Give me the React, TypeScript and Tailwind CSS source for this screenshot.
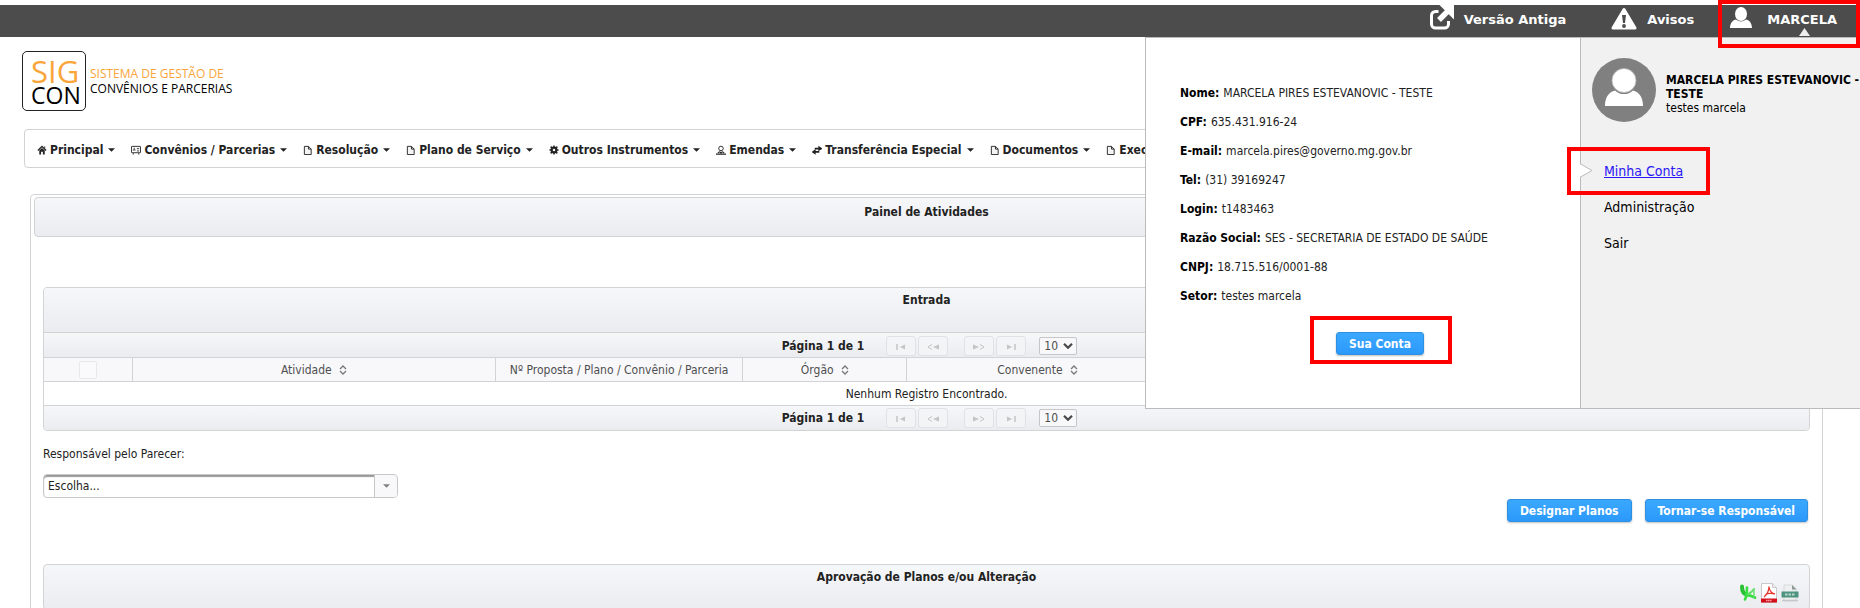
import React from "react";

type IconName = "home" | "contact" | "document" | "gear" | "person" | "transfer";

const menuItems: { icon: IconName; label: string }[] = [
  { icon: "home", label: "Principal" },
  { icon: "contact", label: "Convênios / Parcerias" },
  { icon: "document", label: "Resolução" },
  { icon: "document", label: "Plano de Serviço" },
  { icon: "gear", label: "Outros Instrumentos" },
  { icon: "person", label: "Emendas" },
  { icon: "transfer", label: "Transferência Especial" },
  { icon: "document", label: "Documentos" },
  { icon: "document", label: "Execução" },
];

const accountDetails = [
  { term: "Nome:", value: "MARCELA PIRES ESTEVANOVIC - TESTE" },
  { term: "CPF:", value: "635.431.916-24" },
  { term: "E-mail:", value: "marcela.pires@governo.mg.gov.br" },
  { term: "Tel:", value: "(31) 39169247" },
  { term: "Login:", value: "t1483463" },
  { term: "Razão Social:", value: "SES - SECRETARIA DE ESTADO DE SAÚDE" },
  { term: "CNPJ:", value: "18.715.516/0001-88" },
  { term: "Setor:", value: "testes marcela" },
];

function MenuIcon({ name }: { name: IconName }) {
  return (
    <svg viewBox="0 0 11 11" className="h-[10px] w-[10px] shrink-0" fill="none" stroke="#222" aria-hidden="true">
      {name === "home" && (
        <>
          <path d="M1 6 5.5 1.5 10 6" strokeWidth="1.5" />
          <path d="M2.5 6v4.5h2V7.500h2v3h2V6L5.500 3.200Z" fill="#222" stroke="none" />
          <path d="M8.500 1.500v2" />
        </>
      )}
      {name === "contact" && (
        <>
          <rect x="0.500" y="1.500" width="10" height="7" rx="0.500" />
          <path d="M2 5.500h3M3.500 3v2M6.500 4h2.500M6.500 6.500h2.500M2.500 9v1.500M8.500 9v1.500" />
        </>
      )}
      {name === "document" && (
        <>
          <path d="M1.500 1.500h4.500L9 4.500v6h-7.500z" fill="#f4f4f4" />
          <path d="M6 1.500v3h3" />
        </>
      )}
      {name === "gear" && (
        <>
          <circle cx="5.500" cy="5.500" r="2.600" strokeWidth="2.400" />
          <path d="M5.500 .5v2M5.500 8.500v2M.5 5.500h2M8.500 5.500h2M1.800 1.800l1.500 1.500M7.700 7.700l1.500 1.500M9.200 1.800l-1.500 1.500M3.300 7.700l-1.500 1.500" strokeWidth="1.600" />
        </>
      )}
      {name === "person" && (
        <>
          <circle cx="5.500" cy="3.800" r="2.500" />
          <path d="M2 8.500 4 7.500 5.500 8.500 7 7.500 9 8.500M0 10h11" strokeWidth="1.200" />
        </>
      )}
      {name === "transfer" && (
        <>
          <path d="M3 4h5M3 7.500h5" strokeWidth="1.800" />
          <path d="M7 .8 11.500 4 7 6.800ZM4 4.500 -.5 7.700 4 10.800Z" fill="#222" stroke="none" />
        </>
      )}
    </svg>
  );
}

function CaretDown({ className }: { className: string }) {
  return (
    <svg viewBox="0 0 8 4" className={className} fill="currentColor" aria-hidden="true">
      <path d="M0 0h8L4 4Z" />
    </svg>
  );
}

function SortIcon() {
  return (
    <svg viewBox="0 0 8 10" className="h-[10px] w-2" fill="none" stroke="#777" strokeWidth="1.300" aria-hidden="true">
      <path d="M1 4 4 1l3 3M1 6l3 3 3-3" />
    </svg>
  );
}

function ExternalIcon() {
  return (
    <svg viewBox="0 0 24 25" className="h-[25px] w-6" fill="none" stroke="#fff" aria-hidden="true">
      <path d="M8.500 6.500H5.500A4 4 0 0 0 1.500 10.500v8.500a4 4 0 0 0 4 4H14.500a4 4 0 0 0 4-4v-3" strokeWidth="3" />
      <path d="M9 15 17.500 6.500" strokeWidth="5.500" />
      <path d="M9.500 0H24v14.500Z" fill="#fff" stroke="none" />
    </svg>
  );
}

function WarningIcon() {
  return (
    <svg viewBox="0 0 26 24" className="h-6 w-[26px]" aria-hidden="true">
      <path d="M13 2.500 24 21H2Z" fill="#fff" stroke="#fff" strokeWidth="3" strokeLinejoin="round" />
      <path d="M11 8h4l-1 8h-2z" fill="#4c4c4c" />
      <circle cx="13" cy="19" r="1.900" fill="#4c4c4c" />
    </svg>
  );
}

function UserIcon() {
  return (
    <svg viewBox="0 0 22 21" className="h-[21px] w-[22px]" fill="#fff" aria-hidden="true">
      <path d="M0 21c0-5 3-8 6-8.500a8 8 0 0 0 10 0c3 .5 6 3.500 6 8.500Z" />
      <ellipse cx="11" cy="7" rx="6" ry="7" />
    </svg>
  );
}

function Avatar() {
  return (
    <svg viewBox="0 0 64 64" className="h-16 w-16 shrink-0" aria-hidden="true">
      <circle cx="32" cy="32" r="32" fill="#808080" />
      <path d="M13 48c0-9 4-14 10-15.500a13 13 0 0 0 18 0C47 34 51 39 51 48Z" fill="#fff" />
      <circle cx="32" cy="22.500" r="12" fill="#fff" stroke="#b5b5b5" strokeWidth=".8" />
    </svg>
  );
}

function ExcelIcon() {
  return (
    <svg viewBox="0 0 18 18" className="h-[18px] w-[18px]" fill="none" strokeLinecap="round" aria-hidden="true">
      <path d="M3 2.500C3 7 4.500 10 8 10.500" stroke="#2bbf36" strokeWidth="4" />
      <path d="M6 15.500C7 13.500 8 8 8 3.500" stroke="#35dd40" strokeWidth="2.600" />
      <path d="M7 11c3 0 6 1 9 2.500" stroke="#35dd40" strokeWidth="2.800" />
      <path d="M9 10c2.500-1 4.500-2.500 6-5" stroke="#5fe068" strokeWidth="2" />
      <path d="M15 5v8" stroke="#6fdc76" strokeWidth="1.500" />
    </svg>
  );
}

function PdfIcon() {
  return (
    <svg viewBox="0 0 18 20" className="h-5 w-[18px]" aria-hidden="true">
      <path d="M1.500.500h11l4 4v15h-15z" fill="#fff" stroke="#c9c9c9" />
      <path d="M12.500.500v4h4" fill="#eee" stroke="#c9c9c9" />
      <path d="M9 3.500c0 4-2 8-5 10.500M9 3.500c0 4 3 7 6 7.500M5.500 11.500c3-1.500 6-1.500 9.500-.500" fill="none" stroke="#e5372c" strokeWidth="1.300" />
      <path d="M1 15.500h16v4H1z" fill="#d50f1a" />
      <path d="M6 17.500h6" stroke="#f2a3a6" strokeWidth="1.500" strokeDasharray="1.500 .5" />
    </svg>
  );
}

function CsvIcon() {
  return (
    <svg viewBox="0 0 18 18" className="h-[18px] w-[18px]" aria-hidden="true">
      <path d="M3 1h8.500L15 4.500V17H3z" fill="#eef0f0" stroke="#d5d9d9" />
      <path d="M11 1 15.500 5.500H11z" fill="#8d9794" />
      <path d="M.500 7.500h17v6H.500z" fill="#4f9480" />
      <path d="M4 10.500h10" stroke="#b9d6cc" strokeWidth="2" strokeDasharray="2.500 1" />
      <path d="M1 16.500h16" stroke="#c5cac9" strokeWidth="1.500" />
    </svg>
  );
}

function PrimaryButton({ children }: { children: React.ReactNode }) {
  return (
    <button
      type="button"
      className="h-[23px] rounded-[3px] border border-[#2f8fe0] bg-linear-to-b from-[#3ba8ff] to-[#2b99fb] px-3 pt-px text-[12px] leading-5 font-bold text-white shadow-[0_1px_2px_rgba(0,0,0,0.25)]"
    >
      {children}
    </button>
  );
}

function PagerButton({ label, children }: { label: string; children: React.ReactNode }) {
  return (
    <button
      type="button"
      disabled
      aria-label={label}
      className="flex h-5 w-[30px] items-center justify-center rounded-[3px] border border-[#e0e1e4] bg-[#f3f4f6]"
    >
      <svg viewBox="0 0 12 6" className="mt-[2px] h-[6px] w-3" fill="#c4c4c6" stroke="#c4c4c6" aria-hidden="true">
        {children}
      </svg>
    </button>
  );
}

function Paginator() {
  return (
    <div className="flex h-[25px] items-center justify-center border-t border-[#d2d3d5] bg-linear-to-b from-[#f6f7f9] to-[#ebecf0] pt-px pl-[6px]">
      <span className="mr-[22px] font-bold">Página 1 de 1</span>
      <div className="flex gap-[2px]">
        <PagerButton label="Primeira página">
          <path d="M2 0v6" strokeWidth="1.500" />
          <path d="M10 .5v5L5 3Z" stroke="none" />
        </PagerButton>
        <PagerButton label="Página anterior">
          <path d="M5 .5 1 3l4 2.500" fill="none" />
          <path d="M12 .5v5L6 3Z" stroke="none" />
        </PagerButton>
      </div>
      <div className="ml-4 flex gap-[2px]">
        <PagerButton label="Próxima página">
          <path d="M0 .5v5L6 3Z" stroke="none" />
          <path d="M7 .5 11 3 7 5.500" fill="none" />
        </PagerButton>
        <PagerButton label="Última página">
          <path d="M2 .5v5L7 3Z" stroke="none" />
          <path d="M10 0v6" strokeWidth="1.500" />
        </PagerButton>
      </div>
      <div className="relative ml-[13px]">
        <select
          aria-label="Registros por página"
          className="block h-[18px] w-[38px] appearance-none rounded-[2px] border border-[#c6c6c8] bg-[#f8f8fa] pl-1 text-[12px] leading-4 text-[#4f4f4f]"
        >
          <option>10</option>
        </select>
        <svg viewBox="0 0 10 6" className="pointer-events-none absolute top-[6px] right-1 h-[6px] w-[10px]" fill="none" stroke="#4a4a4a" strokeWidth="2.200" aria-hidden="true">
          <path d="M1 .8 5 4.800 9 .8" />
        </svg>
      </div>
    </div>
  );
}

function Highlight({ className }: { className: string }) {
  return <span aria-hidden="true" className={"pointer-events-none absolute border-4 border-[#ff0000] " + className} />;
}

function AccountPopover() {
  return (
    <section
      aria-label="Minha Conta"
      className="absolute top-[37px] right-0 z-10 flex w-[715px] border-y border-l border-[#bbb] bg-white text-black"
    >
      <div className="flex-1 pt-[41px] pb-[53px] pl-[34px]">
        <dl>
          {accountDetails.map((item) => (
            <div key={item.term} className="flex gap-1 leading-[29px]">
              <dt className="font-bold">{item.term}</dt>
              <dd className="text-[#222]">{item.value}</dd>
            </div>
          ))}
        </dl>
        <div className="mt-[21px] flex justify-center">
          <div className="relative">
            <PrimaryButton>Sua Conta</PrimaryButton>
            <Highlight className="-top-4 -right-7 -bottom-[9px] -left-[26px]" />
          </div>
        </div>
      </div>
      <aside className="w-[280px] border-l border-[#bbb] bg-[#f1f1f1] pt-5">
        <div className="flex gap-[10px] overflow-hidden pl-[11px]">
          <Avatar />
          <div className="pt-[15px] leading-[14px] whitespace-nowrap">
            <p className="font-bold">
              MARCELA PIRES ESTEVANOVIC -<br />
              TESTE
            </p>
            <p>testes marcela</p>
          </div>
        </div>
        <ul className="mt-[31px] text-[14px] leading-9">
          <li className="relative pl-[23px]">
            <svg viewBox="0 0 13 15" className="absolute top-[10px] -left-px h-[15px] w-[13px]" aria-hidden="true">
              <path d="M0 .7 12 7.500 0 14.300" fill="#fff" stroke="#bbb" />
            </svg>
            <a href="#conta" className="text-[#2a17f5] underline">
              Minha Conta
            </a>
            <Highlight className="-top-[6px] -left-[14px] h-12 w-[143px]" />
          </li>
          <li className="pl-[23px]">
            <a href="#administracao">Administração</a>
          </li>
          <li className="pl-[23px]">
            <a href="#sair">Sair</a>
          </li>
        </ul>
      </aside>
    </section>
  );
}

const cellBorder = "border-l border-[#d2d3d5] pt-px first:border-l-0";

export default function App() {
  return (
    <div className="relative min-h-screen overflow-x-hidden bg-white pt-[5px] font-['DejaVu_Sans_Condensed','DejaVu_Sans',sans-serif] text-[12px] leading-4 text-[#222]">
      <header>
        <nav
          aria-label="Usuário"
          className="flex h-8 justify-end bg-[#4c4c4c] pr-[23px] font-['DejaVu_Sans',sans-serif] text-[13px] leading-[29px] font-bold text-white"
        >
          <a href="#versao-antiga" className="mr-[45px] flex gap-[10px]">
            <ExternalIcon />
            Versão Antiga
          </a>
          <a href="#avisos" className="mr-9 flex gap-[10px]">
            <span className="pt-[2px]">
              <WarningIcon />
            </span>
            Avisos
          </a>
          <a href="#conta" className="relative z-20 flex gap-[15px]">
            <span className="pt-[2px]">
              <UserIcon />
            </span>
            MARCELA
            <svg viewBox="0 0 11 8" className="absolute right-[27px] bottom-px h-2 w-[11px]" fill="#eee" aria-hidden="true">
              <path d="M5.500 0 11 8H0Z" />
            </svg>
            <Highlight className="-top-[5px] -right-[23px] -bottom-[11px] -left-3" />
          </a>
        </nav>
        <AccountPopover />
        <div className="mt-[14px] ml-[22px] flex items-center gap-1 font-['Open_Sans',sans-serif]">
          <div className="h-[60px] w-16 rounded-[5px] border border-[#222] pt-[7px] pl-2">
            <div className="text-[31px] leading-[25px] text-[#f9a53a]">SIG</div>
            <div className="text-[23px] leading-[22px] text-black">CON</div>
          </div>
          <div className="text-[12px] leading-[15px] font-medium">
            <div className="text-[#f9a53a]">SISTEMA DE GESTÃO DE</div>
            <div className="text-black">CONVÊNIOS E PARCERIAS</div>
          </div>
        </div>
      </header>

      <nav aria-label="Principal" className="mt-[18px] mr-[31px] ml-6 h-[39px] rounded-[4px] border border-[#d2d3d5] pt-[2px] pl-3">
        <ul className="flex h-full items-center gap-4">
          {menuItems.map((item) => (
            <li key={item.label}>
              <button type="button" className="flex items-center font-bold whitespace-nowrap">
                <MenuIcon name={item.icon} />
                <span className="mr-[5px] ml-[3px]">{item.label}</span>
                <CaretDown className="h-1 w-[7px]" />
              </button>
            </li>
          ))}
        </ul>
      </nav>

      <main className="mt-[26px] mr-[37px] ml-[30px] rounded-[4px] border border-[#d2d3d5] pt-[2px] pb-3">
        <h1 className="mx-[3px] h-10 rounded-[4px] border border-[#d2d3d5] bg-linear-to-b from-[#f6f7f9] to-[#ebecf0] pt-[6px] text-center font-bold">
          Painel de Atividades
        </h1>

        <div className="mx-3">
          <section className="mt-[50px] overflow-hidden rounded-[4px] border border-[#d2d3d5]">
            <h2 className="h-11 bg-linear-to-b from-[#f6f7f9] to-[#ebecf0] pt-1 text-center leading-4 font-bold">
              Entrada
            </h2>
            <Paginator />
            <table className="w-full table-fixed border-t border-[#d2d3d5] text-center">
              <thead className="bg-[#f8f8fb] text-[#4f4f4f]">
                <tr className="h-6">
                  <th scope="col" className={"w-[88px] " + cellBorder}>
                    <input
                      type="checkbox"
                      aria-label="Selecionar todos"
                      className="mx-auto block h-[18px] w-[18px] appearance-none rounded-[2px] border border-[#e8e8ea] bg-[#fafafc]"
                    />
                  </th>
                  <th scope="col" className={"w-[20.6%] font-normal " + cellBorder}>
                    <span className="inline-flex items-center gap-[7px]">
                      Atividade <SortIcon />
                    </span>
                  </th>
                  <th scope="col" className={"w-[14%] font-normal " + cellBorder}>
                    Nº Proposta / Plano / Convênio / Parceria
                  </th>
                  <th scope="col" className={"w-[9.3%] font-normal " + cellBorder}>
                    <span className="inline-flex items-center gap-[7px]">
                      Órgão <SortIcon />
                    </span>
                  </th>
                  <th scope="col" className={"w-[14.8%] font-normal " + cellBorder}>
                    <span className="inline-flex items-center gap-[7px]">
                      Convenente <SortIcon />
                    </span>
                  </th>
                  <td className={cellBorder} />
                </tr>
              </thead>
              <tbody>
                <tr className="h-[23px] border-t border-[#d2d3d5]">
                  <td colSpan={6} className="pt-[2px]">
                    Nenhum Registro Encontrado.
                  </td>
                </tr>
              </tbody>
            </table>
            <Paginator />
          </section>

          <label htmlFor="responsavel" className="mt-[13px] block leading-5">
            Responsável pelo Parecer:
          </label>
          <div className="relative mt-[10px] w-[355px]">
            <select
              id="responsavel"
              className="block h-6 w-full appearance-none rounded-[4px] border border-[#c8c9cb] bg-white pt-px pl-1 text-[12px] shadow-[inset_0_2px_1px_#999]"
            >
              <option>Escolha...</option>
            </select>
            <span className="pointer-events-none absolute inset-y-px right-px flex w-[23px] items-center justify-center rounded-r-[3px] border-l border-[#c8c9cb] bg-[#f8f8fb] text-[#808080]">
              <CaretDown className="h-1 w-[7px]" />
            </span>
          </div>

          <div className="mt-px mr-[2px] flex justify-end gap-[13px]">
            <PrimaryButton>Designar Planos</PrimaryButton>
            <PrimaryButton>Tornar-se Responsável</PrimaryButton>
          </div>

          <section className="mt-[42px] rounded-[4px] border border-[#d2d3d5] bg-linear-to-b from-[#f6f7f9] to-[#ebecf0] pb-[6px]">
            <h2 className="h-[18px] pt-1 text-center leading-4 font-bold">Aprovação de Planos e/ou Alteração</h2>
            <div className="flex items-center justify-end gap-[3px] pr-[10px]">
              <button type="button" aria-label="Exportar para Excel">
                <ExcelIcon />
              </button>
              <button type="button" aria-label="Exportar para PDF">
                <PdfIcon />
              </button>
              <button type="button" aria-label="Exportar para CSV">
                <CsvIcon />
              </button>
            </div>
          </section>
        </div>
      </main>
    </div>
  );
}
